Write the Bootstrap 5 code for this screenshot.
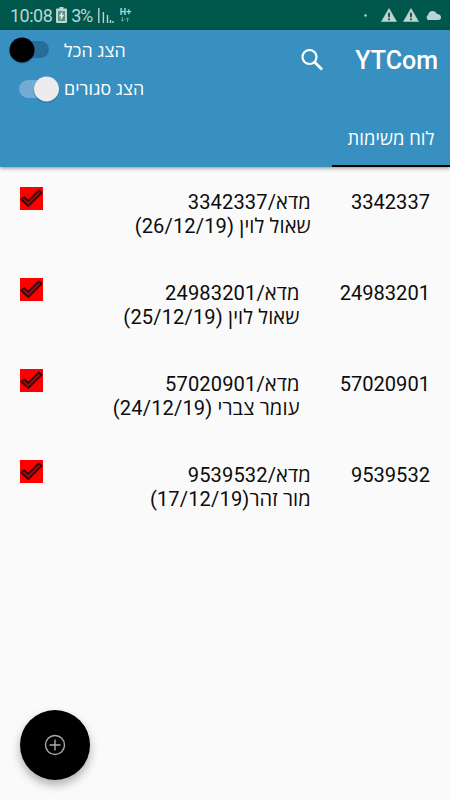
<!DOCTYPE html>
<html lang="he" dir="rtl">
<head>
<meta charset="utf-8">
<meta name="viewport" content="width=device-width, initial-scale=1">
<title>YTCom</title>
<link rel="stylesheet" href="https://cdn.jsdelivr.net/npm/bootstrap@5.3.0/dist/css/bootstrap.min.css">
<style>
body{font-family:Roboto,"Open Sans","Noto Sans",sans-serif;background:#fafafa;color:#0c0c0c;height:800px;overflow:hidden}
.statusbar{height:30px;background:#00574b;color:#bcd5d0;padding:0 9px 0 10px}
.clock{font-size:18px;line-height:31px;letter-spacing:-.5px}
.pct{font-size:18px;letter-spacing:-1.4px;line-height:31px}
.bars,.hplus{margin-left:6px}
.hplus{font-size:9px;line-height:9px;font-weight:700}
.dot{margin-right:14px}
.warn-icon{margin-right:6px}
.appbar{height:137px;background:#3890c1;color:#fff;box-shadow:0 1px 4px rgba(0,0,0,.45)}
.toolbar-row{height:82px}
.brand{font-size:25px;font-weight:500;line-height:62px;padding-right:12px}
.search{margin-top:18px;margin-right:31px}
.toggles{padding-left:8px}
.toggle-line{height:39px}
.toggle-line span{font-size:17.800px;line-height:39px;letter-spacing:.1px;white-space:nowrap}
.toggle-line:first-child span{padding-top:2px}
.tab{width:118px;height:55px;border-bottom:2px solid #000;font-size:18.400px;line-height:53px;letter-spacing:.08px}
.task{height:91px;padding:20px 20px 0;font-size:20.1px;line-height:24px}
.task-num{padding-top:3px;margin-left:40px}
.task-info{padding-top:3px;letter-spacing:.13px}
.fab{width:70px;height:70px;background:#000;left:20px;bottom:20px;box-shadow:0 5px 10px rgba(0,0,0,.3)}
</style>
<script src="https://cdn.jsdelivr.net/npm/bootstrap@5.3.0/dist/js/bootstrap.bundle.min.js"></script>
</head>
<body>
<svg width="0" height="0" class="d-none">
  <symbol id="check" viewBox="0 0 23 23"><rect width="23" height="23" fill="#f00"/><path d="M1.3 12.5 4.2 10.2 8.2 14 18.8 3.3 21.5 5.8 8.3 19Z" fill="#a01010" stroke="#3a0808" stroke-width="1.9" stroke-linejoin="round"/></symbol>
  <symbol id="warn" viewBox="0 0 16 14"><path d="M8 .5 15.5 13.6H.5Z" fill="#bcd5d0" stroke="#bcd5d0" stroke-width=".6" stroke-linejoin="round"/><path d="M8 4.8v4.4M8 10.4v1.8" stroke="#15453d" stroke-width="1.8"/></symbol>
</svg>
<div class="statusbar d-flex align-items-center justify-content-between" dir="ltr">
  <div class="d-flex align-items-center">
    <span class="clock">10:08</span>
    <svg class="ms-1" width="11" height="16" viewBox="0 0 11 16"><path d="M3.5 0h4v1.6H10q1 0 1 1V15q0 1-1 1H1q-1 0-1-1V2.6q0-1 1-1h2.5Z" fill="#bcd5d0"/><path d="M2 4h7v10H2Z" fill="#5f9086"/><path d="M6.600 4 3 9.300h2L4.400 13.500l3.800-5.700H6Z" fill="#e0efec"/></svg>
    <span class="pct ms-1">3%</span>
    <svg class="bars" width="16" height="15" viewBox="0 0 16 15"><path d="M.8 0v15M5.4 4v11M9.5 7v8M12.5 12v3M15 13v2" stroke="#bcd5d0" stroke-width="1.4"/></svg>
    <span class="hplus d-flex flex-column align-items-center">H+
      <svg width="10" height="5" viewBox="0 0 10 5"><path d="M2.5 0v4M.8 2.5l1.700 1.700 1.700-1.700M7.500 5V1M5.800 2.500 7.500.8l1.700 1.700" fill="none" stroke="#6c9e94"/></svg></span>
  </div>
  <div class="d-flex align-items-center">
    <svg class="dot" width="3" height="3"><circle cx="1.5" cy="1.5" r="1.200" fill="#bcd5d0"/></svg>
    <svg class="warn-icon" width="16" height="14"><use href="#warn"/></svg>
    <svg class="warn-icon" width="16" height="14"><use href="#warn"/></svg>
    <svg width="16" height="10" viewBox="0 0 16 10"><path d="M3 10a3 3 0 0 1 0-5Q4 1 7.500 1q3 0 4.500 3 4 0 4 3.500 0 2.500-3 2.500Z" fill="#bcd5d0"/></svg>
  </div>
</div>
<header class="appbar position-relative">
  <div class="toolbar-row d-flex">
    <div class="brand" dir="ltr">YTCom</div>
    <svg class="search" width="24" height="24" viewBox="0 0 24 24" fill="none" stroke="#fff" stroke-width="2.2"><circle cx="9.5" cy="9" r="7"/><path d="m14.5 14 7.500 7.500" stroke-width="2.800"/></svg>
    <div class="toggles me-auto" dir="ltr">
      <div class="toggle-line d-flex align-items-center">
        <svg width="52" height="34" viewBox="0 0 52 34"><rect x="8" y="8" width="33" height="17" rx="8.5" fill="#286d98"/><circle cx="14" cy="18" r="13" fill="#15557c" opacity=".25"/><circle cx="14" cy="17" r="12.5"/></svg>
        <span class="ms-1" dir="rtl">הצג הכל</span>
      </div>
      <div class="toggle-line d-flex align-items-center">
        <svg width="52" height="34" viewBox="0 0 52 34"><rect x="11" y="8" width="33" height="18" rx="9" fill="#73acd2"/><circle cx="38.5" cy="18" r="13" fill="#15557c" opacity=".35"/><circle cx="38.5" cy="17" r="12.5" fill="#ececec"/></svg>
        <span class="ms-1" dir="rtl">הצג סגורים</span>
      </div>
    </div>
  </div>
  <div class="tab text-center">לוח משימות</div>
</header>
<main>
  <div class="task d-flex"><div class="task-num">3342337</div><div class="task-info">מדא/3342337<br>שאול לוין (26/12/19)</div><svg class="me-auto" width="23" height="23"><use href="#check"/></svg></div>
  <div class="task d-flex"><div class="task-num">24983201</div><div class="task-info">מדא/24983201<br>שאול לוין (25/12/19)</div><svg class="me-auto" width="23" height="23"><use href="#check"/></svg></div>
  <div class="task d-flex"><div class="task-num">57020901</div><div class="task-info">מדא/57020901<br>עומר צברי (24/12/19)</div><svg class="me-auto" width="23" height="23"><use href="#check"/></svg></div>
  <div class="task d-flex"><div class="task-num">9539532</div><div class="task-info">מדא/9539532<br>מור זהר(17/12/19)</div><svg class="me-auto" width="23" height="23"><use href="#check"/></svg></div>
</main>
<button class="fab btn rounded-circle position-fixed p-0 border-0 d-flex align-items-center justify-content-center" aria-label="הוספה">
  <svg width="22" height="22" viewBox="0 0 22 22" fill="none" stroke="#aaa" stroke-width="1.4"><circle cx="11" cy="11" r="9.5"/><path d="M11 5.500v11M5.500 11h11"/></svg>
</button>
</body>
</html>
